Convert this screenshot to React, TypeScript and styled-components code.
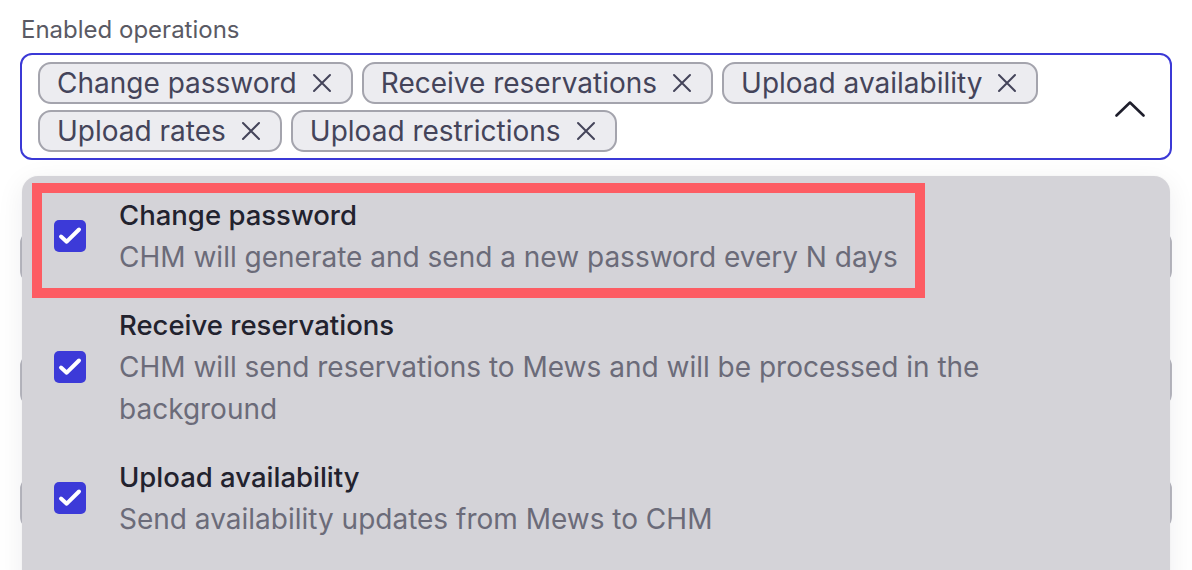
import React from "react";
import styled, { createGlobalStyle } from "styled-components";

const Global = createGlobalStyle`
  html, body { margin: 0; padding: 0; background: #ffffff; }
  body { font-family: Inter, "Noto Sans", sans-serif; -webkit-font-smoothing: antialiased; }
  * { box-sizing: border-box; }
`;

const Page = styled.div`
  position: relative;
  width: 1192px;
  height: 570px;
  overflow: hidden;
  padding: 15px 20px 0 20px;
  display: flex;
  flex-direction: column;
  gap: 35px;
`;

const Field = styled.div`
  display: flex;
  flex-direction: column;
  gap: ${(p: { $gap?: number }) => p.$gap ?? 8}px;
`;

const Label = styled.div`
  font-size: 24px;
  line-height: 30px;
  color: #5a5a64;
  padding-left: 1px;
`;

const SelectWrap = styled.div`
  position: relative;
`;

const Control = styled.div`
  display: flex;
  align-items: center;
  border: 2px solid #3b39d6;
  border-radius: 12px;
  padding: 7px 25px 6px 16px;
  background: #fff;
`;

const TagList = styled.div`
  flex: 1;
  display: flex;
  flex-wrap: wrap;
  gap: 6px 9px;
`;

const Tag = styled.span`
  display: inline-flex;
  align-items: center;
  height: 42px;
  padding: 0 19px 0 17px;
  gap: 15px;
  border: 2px solid #a4a4ad;
  border-radius: 13px;
  background: #ececf0;
  color: #44445a;
  font-size: 28px;
  line-height: 38px;
`;

const Chevron = styled.svg`
  width: 30px;
  height: 18px;
  margin-top: 4px;
  flex: none;
`;

const Menu = styled.div`
  position: absolute;
  top: calc(100% + 16px);
  left: 2px;
  right: 2px;
  z-index: 5;
  background: #d4d3d8;
  border-radius: 16px;
  padding-top: 5px;
  box-shadow: 0 6px 28px rgba(20, 20, 40, 0.07), 0 0 0 1px rgba(0,0,0,0.01);
  height: 420px;
  overflow: hidden;
`;

const Option = styled.div`
  display: flex;
  align-items: center;
  gap: 33px;
  padding: 13px 32px;
`;

const Check = styled.span`
  flex: none;
  width: 32px;
  height: 32px;
  border-radius: 5px;
  background: #3c3ad8;
  display: flex;
  align-items: center;
  justify-content: center;
`;

const OptionText = styled.div`
  display: flex;
  flex-direction: column;
`;

const Title = styled.div`
  font-size: 27.5px;
  font-weight: 500;
  line-height: 42px;
  color: #22222e;
`;

const Desc = styled.div`
  font-size: 28px;
  line-height: 42px;
  color: #6b6b79;
`;

const Annotation = styled.div`
  position: absolute;
  left: 10px;
  top: 7px;
  width: 893px;
  height: 115px;
  border: 10px solid #fd5c63;
  pointer-events: none;
`;

const Input = styled.div`
  height: 52px;
  border: 2px solid #b9b9c1;
  border-radius: 12px;
  background: #fff;
`;

const CloseIcon = () => (
  <svg width="20" height="20" viewBox="0 0 20 20" fill="none" stroke="#44445a" strokeWidth="2" strokeLinecap="round">
    <path d="M2 2 L18 18 M18 2 L2 18" />
  </svg>
);

const CheckIcon = () => (
  <svg width="32" height="32" viewBox="0 0 32 32" fill="none" stroke="#ffffff" strokeWidth="4" strokeLinecap="round" strokeLinejoin="round">
    <path d="M7 16.5 L12.7 21.7 L25 9.5" />
  </svg>
);

const tags = ["Change password", "Receive reservations", "Upload availability", "Upload rates", "Upload restrictions"];

const options = [
  { title: "Change password", desc: "CHM will generate and send a new password every N days" },
  { title: "Receive reservations", desc: "CHM will send reservations to Mews and will be processed in the background" },
  { title: "Upload availability", desc: "Send availability updates from Mews to CHM" },
];

export default function App() {
  return (
    <>
      <Global />
      <Page>
        <Field>
          <Label>Enabled operations</Label>
          <SelectWrap>
            <Control>
              <TagList>
                {tags.map((t) => (
                  <Tag key={t}>
                    {t}
                    <CloseIcon />
                  </Tag>
                ))}
              </TagList>
              <Chevron viewBox="0 0 30 18" fill="none" stroke="#1e1e2c" strokeWidth="2.6" strokeLinecap="round" strokeLinejoin="round">
                <path d="M1.5 15.5 L15 2.5 L28.5 15.5" />
              </Chevron>
            </Control>
            <Menu>
              {options.map((o) => (
                <Option key={o.title}>
                  <Check>
                    <CheckIcon />
                  </Check>
                  <OptionText>
                    <Title>{o.title}</Title>
                    <Desc>{o.desc}</Desc>
                  </OptionText>
                </Option>
              ))}
              <Annotation />
            </Menu>
          </SelectWrap>
        </Field>
        <Field $gap={6}>
          <Label>Password change interval</Label>
          <Input />
        </Field>
        <Field $gap={6}>
          <Label>Username</Label>
          <Input />
        </Field>
        <Field $gap={6}>
          <Label>Password</Label>
          <Input />
        </Field>
      </Page>
    </>
  );
}
